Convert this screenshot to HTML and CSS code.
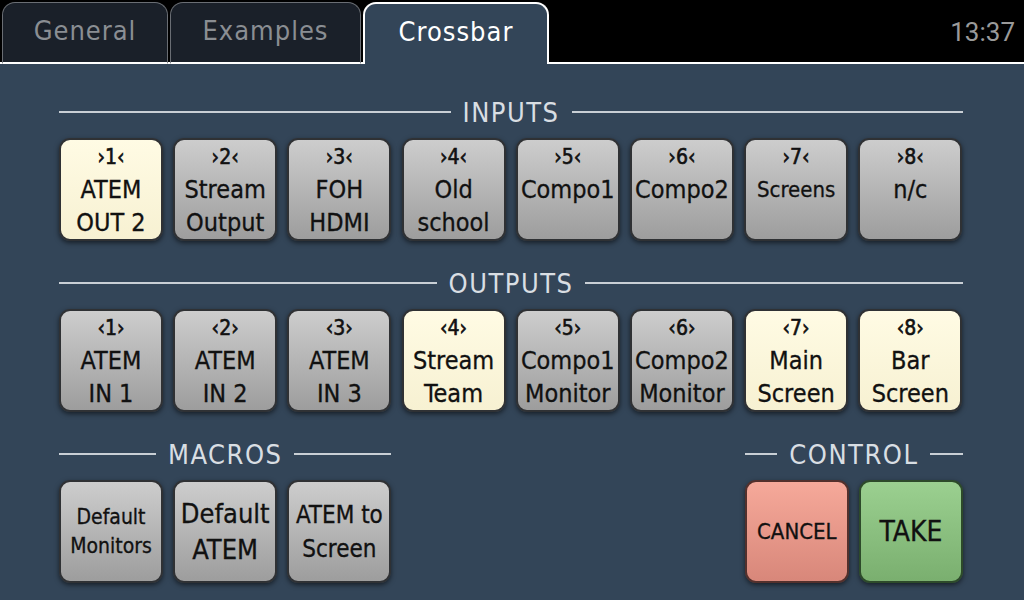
FILE: index.html
```html
<!DOCTYPE html>
<html lang="en">
<head>
  <meta charset="UTF-8" />
  <title>Crossbar</title>
  <link rel="stylesheet" href="styles.css">
</head>
<body>
  <div class="topbar">
    <div class="tab">General</div>
    <div class="tab">Examples</div>
    <div class="tab active">Crossbar</div>
    <div class="clock">13:37</div>
  </div>

  <div class="main">
    <div class="heading"><span>INPUTS</span></div>
    <div class="row">
      <div class="btn sel"><div class="num">›1‹</div><div class="lbl">ATEM<br>OUT 2</div></div>
      <div class="btn"><div class="num">›2‹</div><div class="lbl">Stream<br>Output</div></div>
      <div class="btn"><div class="num">›3‹</div><div class="lbl">FOH<br>HDMI</div></div>
      <div class="btn"><div class="num">›4‹</div><div class="lbl">Old<br>school</div></div>
      <div class="btn"><div class="num">›5‹</div><div class="lbl">Compo1</div></div>
      <div class="btn"><div class="num">›6‹</div><div class="lbl">Compo2</div></div>
      <div class="btn"><div class="num">›7‹</div><div class="lbl small">Screens</div></div>
      <div class="btn"><div class="num">›8‹</div><div class="lbl">n/c</div></div>
    </div>

    <div class="heading"><span>OUTPUTS</span></div>
    <div class="row">
      <div class="btn"><div class="num">‹1›</div><div class="lbl">ATEM<br>IN 1</div></div>
      <div class="btn"><div class="num">‹2›</div><div class="lbl">ATEM<br>IN 2</div></div>
      <div class="btn"><div class="num">‹3›</div><div class="lbl">ATEM<br>IN 3</div></div>
      <div class="btn sel"><div class="num">‹4›</div><div class="lbl">Stream<br>Team</div></div>
      <div class="btn"><div class="num">‹5›</div><div class="lbl">Compo1<br>Monitor</div></div>
      <div class="btn"><div class="num">‹6›</div><div class="lbl">Compo2<br>Monitor</div></div>
      <div class="btn sel"><div class="num">‹7›</div><div class="lbl">Main<br>Screen</div></div>
      <div class="btn sel"><div class="num">‹8›</div><div class="lbl">Bar<br>Screen</div></div>
    </div>

    <div class="bottom">
      <div class="group">
        <div class="heading"><span>MACROS</span></div>
        <div class="buttons">
          <div class="btn macro m1">Default<br>Monitors</div>
          <div class="btn macro m2">Default<br>ATEM</div>
          <div class="btn macro m3">ATEM to<br>Screen</div>
        </div>
      </div>
      <div class="group">
        <div class="heading"><span>CONTROL</span></div>
        <div class="buttons">
          <div class="btn macro cancel">CANCEL</div>
          <div class="btn macro take">TAKE</div>
        </div>
      </div>
    </div>
  </div>
</body>
</html>
```

FILE: styles.css
```css
body {
  margin: 0;
  width: 1024px;
  height: 600px;
  overflow: hidden;
  background: #334558;
  font-family: "DejaVu Sans Condensed", "DejaVu Sans", sans-serif;
}
.topbar {
  height: 62px;
  background: #000;
  border-bottom: 2px solid #fff;
  display: flex;
  align-items: flex-end;
  padding-left: 2px;
  gap: 2px;
}
.tab {
  height: 62px;
  box-sizing: border-box;
  border: 1.5px solid #6a6e74;
  border-radius: 13px 13px 0 0;
  background: #1a2029;
  color: #8a8e93;
  font-size: 27px;
  letter-spacing: 1px;
  display: flex;
  align-items: center;
  justify-content: center;
  padding-bottom: 4px;
  margin-bottom: -2px;
  border-bottom: 2px solid #fff;
}
.tab:nth-child(1) { width: 166px; }
.tab:nth-child(2) { width: 191px; }
.tab.active {
  width: 186px;
  height: 62px;
  background: #334558;
  color: #fff;
  border: 2px solid #fff;
  border-bottom: none;
  padding-bottom: 6px;
}
.clock {
  margin-left: auto;
  margin-right: 9px;
  align-self: center;
  color: #9a9a9a;
  font-family: Roboto, sans-serif;
  font-size: 26px;
  padding-top: 2px;
}
.main {
  padding: 32px 61px 0 59px;
}
.heading {
  height: 32px;
  display: flex;
  align-items: center;
  gap: 12px;
  margin-bottom: 10px;
  color: #d9dee3;
  font-size: 27px;
  letter-spacing: 1.5px;
}
.heading::before,
.heading::after {
  content: "";
  flex: 1;
  height: 2px;
  background: #c9cfd5;
}
.row {
  display: grid;
  grid-template-columns: repeat(8, 104px);
  gap: 10.2px;
  margin-bottom: 26px;
}
.btn {
  height: 103px;
  box-sizing: border-box;
  border: 2px solid #2f3134;
  border-radius: 11px;
  background: linear-gradient(#cdcdcd, #9d9d9d);
  box-shadow: 0 2px 5px rgba(0, 0, 0, 0.55);
  color: #111;
  display: flex;
  flex-direction: column;
  align-items: center;
  text-align: center;
  padding-top: 5px;
}
.btn.sel {
  background: linear-gradient(#fffbe4, #f7f1d2);
}
.num {
  font-size: 21px;
  line-height: 24px;
  -webkit-text-stroke: 0.6px #111;
}
.lbl {
  margin-top: 4px;
  font-size: 25px;
  line-height: 33px;
  white-space: nowrap;
  -webkit-text-stroke: 0.3px #111;
}
.lbl.small {
  font-size: 22px;
}
.bottom {
  display: flex;
  justify-content: space-between;
}
.buttons {
  display: flex;
  gap: 10.2px;
}
.btn.macro {
  width: 104px;
  padding-top: 0;
  justify-content: center;
  white-space: nowrap;
  -webkit-text-stroke: 0.3px #111;
}
.m1 { font-size: 21px; line-height: 29px; }
.m2 { font-size: 27px; line-height: 36px; }
.m3 { font-size: 24px; line-height: 34px; }
.cancel {
  background: linear-gradient(#f6a99a, #d8877a);
  border-color: #53302c;
  font-size: 22px;
}
.take {
  background: linear-gradient(#9bd090, #7aaf6f);
  border-color: #2d4a2a;
  font-size: 28px;
}
```
